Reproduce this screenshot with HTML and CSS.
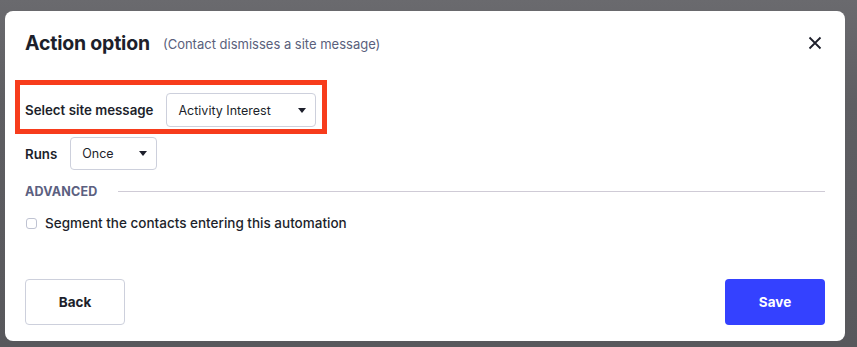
FILE: index.html
```html
<!DOCTYPE html>
<html lang="en">
<head>
    <meta charset="UTF-8">
    <title>Action option</title>
    <link rel="stylesheet" href="styles.css">
</head>
<body>
    <div class="modal">
        <div class="modal-header">
            <h2 class="modal-title">Action option</h2>
            <span class="modal-subtitle">(Contact dismisses a site message)</span>
            <button class="close-btn" aria-label="Close">
                <svg width="14" height="14" viewBox="0 0 14 14">
                    <path d="M1.5 1.5 L12.5 12.5 M12.5 1.5 L1.5 12.5" stroke="#1d1f2b" stroke-width="1.8" fill="none"/>
                </svg>
            </button>
        </div>

        <div class="highlight">
            <div class="field">
                <label class="field-label">Select site message</label>
                <div class="select select-wide">
                    <span>Activity Interest</span>
                    <span class="caret"></span>
                </div>
            </div>
        </div>

        <div class="field field-runs">
            <label class="field-label">Runs</label>
            <div class="select select-narrow">
                <span>Once</span>
                <span class="caret"></span>
            </div>
        </div>

        <div class="section-divider">
            <span>ADVANCED</span>
            <div class="rule"></div>
        </div>

        <label class="checkbox-row">
            <span class="checkbox"></span>
            Segment the contacts entering this automation
        </label>

        <div class="modal-footer">
            <button class="btn btn-back">Back</button>
            <button class="btn btn-save">Save</button>
        </div>
    </div>
</body>
</html>
```

FILE: styles.css
```css
* {
    margin: 0;
    padding: 0;
    box-sizing: border-box;
}

body {
    font-family: 'Inter', 'Roboto', sans-serif;
    background: linear-gradient(180deg, #6a6a6e 0%, #5e5e62 30%, #58585c 100%);
    color: #1d1f2b;
    height: 347px;
    overflow: hidden;
}

.modal {
    margin: 11px 12px 0 5px;
    width: 840px;
    height: 330px;
    background: #ffffff;
    border-radius: 8px;
    padding: 20px 20px 16px 20px;
    display: flex;
    flex-direction: column;
}

.modal-header {
    display: flex;
    align-items: center;
    height: 24px;
    margin-bottom: 25px;
}

.modal-title {
    font-size: 19.5px;
    font-weight: 700;
    letter-spacing: -0.2px;
}

.modal-subtitle {
    margin-left: 13px;
    font-size: 13px;
    color: #5a5f7c;
    padding-top: 2px;
}

.close-btn {
    margin-left: auto;
    margin-right: 3px;
    background: none;
    border: none;
    display: flex;
}

.highlight {
    margin-left: -10px;
    width: 312px;
    border: 5px solid #f73c1c;
    padding: 8px 5px 2px 5px;
}

.field {
    display: flex;
    align-items: center;
}

.field-label {
    font-size: 13.3px;
    font-weight: 600;
    white-space: nowrap;
    margin-right: 13px;
}

.select {
    flex-shrink: 0;
    display: flex;
    align-items: center;
    justify-content: space-between;
    border: 1px solid #cdd0dc;
    border-radius: 4px;
    font-size: 12.5px;
    padding: 0 9px 0 11px;
}

.select-wide {
    width: 150px;
    height: 34px;
}

.field-runs {
    margin-top: 3px;
}

.select-narrow {
    width: 87px;
    height: 33px;
}

.caret {
    width: 0;
    height: 0;
    border-left: 4.5px solid transparent;
    border-right: 4.5px solid transparent;
    border-top: 5px solid #1d1f2b;
}

.section-divider {
    display: flex;
    align-items: center;
    margin-top: 14px;
    height: 14px;
}

.section-divider span {
    font-size: 12.5px;
    font-weight: 700;
    color: #5b6080;
    letter-spacing: 0.2px;
}

.rule {
    flex: 1;
    height: 1px;
    background: #cfcbd6;
    margin-left: 20px;
}

.checkbox-row {
    display: flex;
    align-items: center;
    margin-top: 17px;
    font-size: 13.5px;
    font-weight: 500;
}

.checkbox {
    width: 11px;
    height: 11px;
    border: 1px solid #bfc3d2;
    border-radius: 3px;
    margin: 0 8px 0 1px;
}

.modal-footer {
    margin-top: auto;
    display: flex;
    justify-content: space-between;
}

.btn {
    font-family: inherit;
    font-size: 13.5px;
    font-weight: 700;
    width: 100px;
    height: 46px;
    border-radius: 4px;
}

.btn-back {
    background: #ffffff;
    border: 1px solid #cdd0dc;
    color: #1d1f2b;
}

.btn-save {
    background: #3441ff;
    border: none;
    color: #ffffff;
}
```
